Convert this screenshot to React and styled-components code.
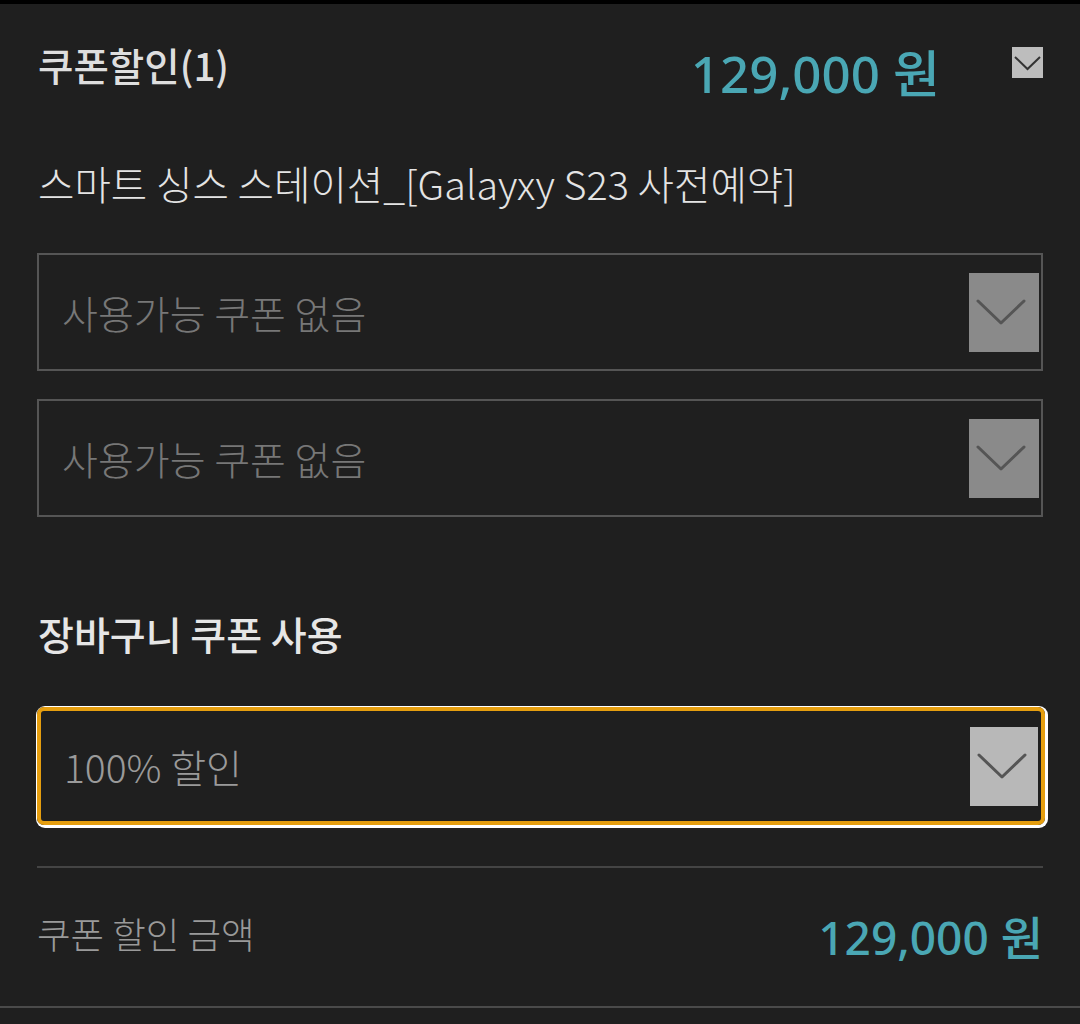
import React from "react";
import styled, { createGlobalStyle } from "styled-components";

const Global = createGlobalStyle`
  html, body { margin: 0; padding: 0; background: #1c1d20; }
  body { font-family: "Noto Sans CJK KR", "Noto Sans", sans-serif; }
`;

const Page = styled.div`
  width: 1080px;
  height: 1024px;
  box-sizing: border-box;
  border-top: 4px solid #000;
  background: #1f1f1f;
  display: flex;
  flex-direction: column;
  overflow: hidden;
`;

const Content = styled.div`
  padding: 0 37px;
  display: flex;
  flex-direction: column;
`;

const Header = styled.div`
  display: flex;
  align-items: flex-start;
  height: 100px;
`;

const Title = styled.div`
  flex: 1;
  margin-top: 34px;
  padding-left: 1px;
  font-size: 38.5px;
  line-height: 52px;
  font-weight: 500;
  color: #dedede;
`;

const Price = styled.div`
  margin-top: 38px;
  margin-right: 72px;
  font-size: 51px;
  line-height: 62px;
  color: #4aa7b4;
  font-family: "Noto Sans", "Noto Sans CJK KR", sans-serif;
  font-weight: 500;
  white-space: nowrap;
`;

const CheckBox = styled.div`
  margin-top: 43px;
  width: 31px;
  height: 31px;
  background: #bdbdbd;
  display: flex;
`;

const Subtitle = styled.div`
  margin-top: 53px;
  padding-left: 1px;
  font-size: 39.6px;
  line-height: 52px;
  font-weight: 300;
  color: #e4e4e4;
  white-space: nowrap;
`;

const Select = styled.div`
  box-sizing: border-box;
  height: 118px;
  margin-top: ${(p) => p.$mt}px;
  border: 2px solid #555;
  display: flex;
  align-items: center;
  justify-content: space-between;
  padding: 0 2px 0 23px;
`;

const FocusSelect = styled.div`
  box-sizing: border-box;
  height: 118px;
  width: 1008px;
  margin-top: 48px;
  border: 4px solid #e59e0f;
  border-radius: 7px;
  box-shadow: 1px 1px 0 2px #fff;
  display: flex;
  align-items: center;
  justify-content: space-between;
  padding: 0 3px 0 23px;
`;

const SelectText = styled.span`
  font-size: 39px;
  line-height: 52px;
  font-weight: 300;
  color: ${(p) => p.$color};
`;

const ChevronBox = styled.div`
  width: ${(p) => p.$w}px;
  height: 79px;
  background: ${(p) => p.$bg};
  display: flex;
`;

const SectionTitle = styled.div`
  margin-top: 90px;
  padding-left: 1px;
  font-size: 39px;
  line-height: 52px;
  font-weight: 500;
  color: #e6e6e6;
`;

const Divider = styled.div`
  margin-top: 41px;
  height: 2px;
  background: #444;
`;

const AmountRow = styled.div`
  height: 138px;
  display: flex;
  align-items: center;
  justify-content: space-between;
`;

const AmountLabel = styled.span`
  font-size: 36.5px;
  line-height: 50px;
  font-weight: 300;
  color: #9a9a9a;
  margin-top: -6px;
`;

const AmountPrice = styled.span`
  font-size: 46px;
  line-height: 56px;
  color: #4aa7b4;
  font-family: "Noto Sans", "Noto Sans CJK KR", sans-serif;
  font-weight: 500;
`;

const BottomLine = styled.div`
  height: 2px;
  background: #4a4a4a;
`;

const Chevron = ({ w = 70, h = 79 }) => (
  <svg width={w} height={h} viewBox={`0 0 ${w} ${h}`}>
    <polyline
      points="9,28 32,50 55,28"
      fill="none"
      stroke="#555"
      strokeWidth="3"
      strokeLinecap="round"
      strokeLinejoin="round"
    />
  </svg>
);

const SmallChevron = () => (
  <svg width="31" height="31" viewBox="0 0 31 31">
    <polyline points="3,10 15.5,22 28,10" fill="none" stroke="#333" strokeWidth="2" />
  </svg>
);

export default function App() {
  return (
    <>
      <Global />
      <Page>
        <Content>
          <Header>
            <Title>쿠폰할인(1)</Title>
            <Price>129,000 원</Price>
            <CheckBox>
              <SmallChevron />
            </CheckBox>
          </Header>
          <Subtitle>스마트 싱스 스테이션_[Galayxy S23 사전예약]</Subtitle>
          <Select $mt={44}>
            <SelectText $color="#777">사용가능 쿠폰 없음</SelectText>
            <ChevronBox $w={70} $bg="#8a8a8a">
              <Chevron />
            </ChevronBox>
          </Select>
          <Select $mt={28}>
            <SelectText $color="#777">사용가능 쿠폰 없음</SelectText>
            <ChevronBox $w={70} $bg="#8a8a8a">
              <Chevron />
            </ChevronBox>
          </Select>
          <SectionTitle>장바구니 쿠폰 사용</SectionTitle>
          <FocusSelect>
            <SelectText $color="#9a9a9a">100% 할인</SelectText>
            <ChevronBox $w={68} $bg="#b8b8b8">
              <Chevron w={68} />
            </ChevronBox>
          </FocusSelect>
          <Divider />
          <AmountRow>
            <AmountLabel>쿠폰 할인 금액</AmountLabel>
            <AmountPrice>129,000 원</AmountPrice>
          </AmountRow>
        </Content>
        <BottomLine />
      </Page>
    </>
  );
}
